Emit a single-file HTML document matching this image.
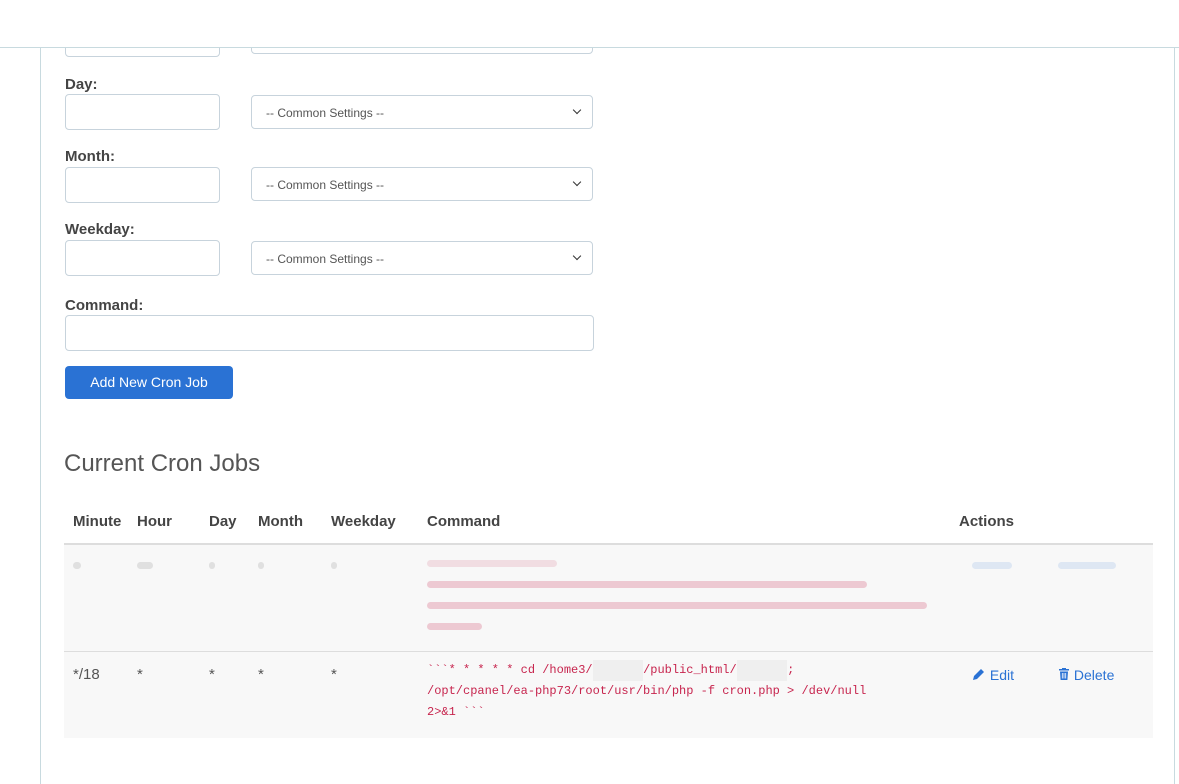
<!DOCTYPE html>
<html><head><meta charset="utf-8"><style>
html,body{margin:0;width:1179px;height:784px;overflow:hidden}
body{background:#fff;font-family:"Liberation Sans",sans-serif;color:#333;position:relative}
.frame{position:absolute;left:40px;top:47px;width:1135px;height:737px;border-left:1px solid #c8dadf;border-right:1px solid #c8dadf;box-sizing:border-box}
.cover{position:absolute;left:0;top:0;width:1179px;height:47px;background:#fff;border-bottom:1px solid #c8dadf;z-index:5}
label{position:absolute;left:65px;font-weight:bold;font-size:15px;color:#444}
.in{position:absolute;left:65px;width:155px;height:36px;border:1px solid #c7d3dc;border-radius:4px;box-sizing:border-box}
.sel{position:absolute;left:251px;width:342px;height:34px;border:1px solid #c7d3dc;border-radius:4px;box-sizing:border-box;font-size:12px;color:#555;padding:10px 0 0 14px}
.sel:after{content:"";position:absolute;right:12px;top:11px;width:5px;height:5px;border-right:1.6px solid #333;border-bottom:1.6px solid #333;transform:rotate(45deg)}
.btn{position:absolute;left:65px;top:366px;width:168px;height:33px;background:#2a72d4;border-radius:4px;color:#fff;font-size:14px;text-align:center;line-height:33px}
h2{position:absolute;left:64px;top:450px;margin:0;font-weight:300;font-size:24px;color:#555}
.hd{position:absolute;top:513px;font-size:15px;font-weight:bold;color:#444}
.row{position:absolute;left:64px;width:1089px;background:#f8f8f8}
.c{position:absolute;font-size:15px;color:#555}
.mono{position:absolute;font-family:"Liberation Mono",monospace;font-size:12px;color:#c7254e;line-height:21px;white-space:nowrap}
.bl{position:absolute;height:7px;border-radius:4px}
.lnk{position:absolute;color:#2a72d4;font-size:14px}
.red{background:#c7254e;opacity:.22}
.gr{background:#999;opacity:.25}
.bu{background:#2a72d4;opacity:.12}
.mask{display:inline-block;background:#efefef;color:transparent}
</style></head><body>
<div class="frame"></div>
<div class="in" style="top:20px;height:37px"></div>
<div class="sel" style="top:20px;height:34px"></div>
<div class="cover"></div>

<label style="top:76px">Day:</label>
<div class="in" style="top:94px"></div><div class="sel" style="top:95px">-- Common Settings --</div>
<label style="top:148px">Month:</label>
<div class="in" style="top:167px"></div><div class="sel" style="top:167px">-- Common Settings --</div>
<label style="top:221px">Weekday:</label>
<div class="in" style="top:240px"></div><div class="sel" style="top:241px">-- Common Settings --</div>
<label style="top:297px">Command:</label>
<div class="in" style="top:315px;width:529px;height:36px"></div>
<div class="btn">Add New Cron Job</div>
<h2>Current Cron Jobs</h2>

<div class="hd" style="left:73px">Minute</div>
<div class="hd" style="left:137px">Hour</div>
<div class="hd" style="left:209px">Day</div>
<div class="hd" style="left:258px">Month</div>
<div class="hd" style="left:331px">Weekday</div>
<div class="hd" style="left:427px">Command</div>
<div class="hd" style="left:959px">Actions</div>

<div class="row" style="top:543px;height:108px;border-top:2px solid #ddd;box-sizing:border-box">
 <div class="bl gr" style="left:9px;top:17px;width:8px"></div>
 <div class="bl gr" style="left:73px;top:17px;width:16px"></div>
 <div class="bl gr" style="left:145px;top:17px;width:6px"></div>
 <div class="bl gr" style="left:194px;top:17px;width:6px"></div>
 <div class="bl gr" style="left:267px;top:17px;width:6px"></div>
 <div class="bl red" style="left:363px;top:15px;width:130px;opacity:.12"></div>
 <div class="bl red" style="left:363px;top:36px;width:440px"></div>
 <div class="bl red" style="left:363px;top:57px;width:500px"></div>
 <div class="bl red" style="left:363px;top:78px;width:55px"></div>
 <div class="bl bu" style="left:908px;top:17px;width:40px"></div>
 <div class="bl bu" style="left:994px;top:17px;width:58px"></div>
</div>
<div class="row" style="top:651px;height:87px;border-top:1px solid #ddd;box-sizing:border-box">
 <div class="c" style="left:9px;top:14px">*/18</div><div class="c" style="left:73px;top:14px">*</div><div class="c" style="left:145px;top:14px">*</div><div class="c" style="left:194px;top:14px">*</div><div class="c" style="left:267px;top:14px">*</div>
 <div class="mono" style="left:363px;top:8px">&#96;&#96;&#96;* * * * * cd /home3/<span class="mask">xxxxxxx</span>/public_html/<span class="mask">xxxxxxx</span>;<br>/opt/cpanel/ea-php73/root/usr/bin/php -f cron.php &gt; /dev/null<br>2&gt;&amp;1 &#96;&#96;&#96;</div>
 <div class="lnk" style="left:908px;top:15px"><svg width="14" height="14" viewBox="0 0 14 14" style="vertical-align:-1px"><path d="M1 13l1-4 7-7 3 3-7 7z" fill="#2a72d4"/></svg> Edit</div>
 <div class="lnk" style="left:994px;top:15px"><svg width="12" height="14" viewBox="0 0 12 14" style="vertical-align:-1px"><path d="M4 1h4v1h3v1.5H1V2h3z M2 4.5h8l-.6 8.5H2.6z" fill="#2a72d4"/><path d="M4.3 6v5.5M6 6v5.5M7.7 6v5.5" stroke="#fff" stroke-width=".8"/></svg> Delete</div>
</div>
</body></html>
